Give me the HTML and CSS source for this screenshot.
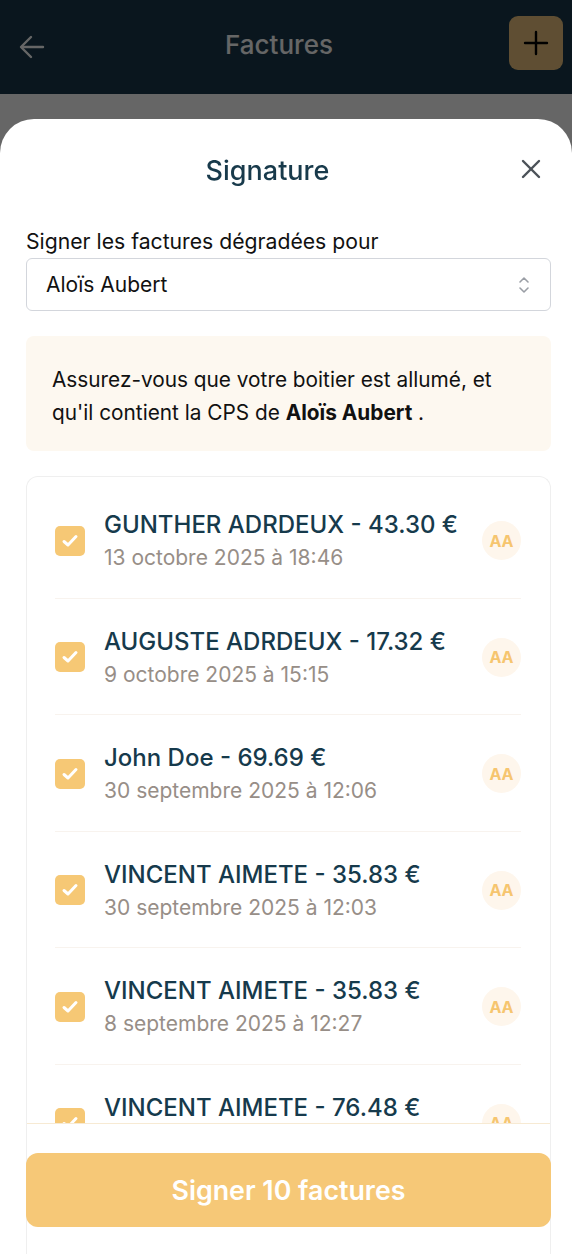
FILE: index.html
```html
<!DOCTYPE html>
<html lang="fr">
<head>
    <meta charset="UTF-8">
    <meta name="viewport" content="width=device-width, initial-scale=1">
    <title>Factures</title>
    <link rel="stylesheet" href="styles.css">
</head>
<body>
<!-- Barre du haut -->
<header class="topbar">
    <button class="icon-btn back" aria-label="Retour">
        <svg width="26" height="24" viewBox="0 0 26 24" fill="none" stroke="currentColor" stroke-width="2.4" stroke-linecap="round" stroke-linejoin="round">
            <path d="M24 12H3"/><path d="M12 2L2 12l10 10"/>
        </svg>
    </button>
    <h1 class="topbar-title">Factures</h1>
    <button class="add-btn" aria-label="Ajouter">
        <svg width="28" height="28" viewBox="0 0 28 28" fill="none" stroke="currentColor" stroke-width="2.4" stroke-linecap="round">
            <path d="M14 3v22"/><path d="M3 14h22"/>
        </svg>
    </button>
</header>
<main class="page-body"></main>

<!-- Fond assombri -->
<div class="backdrop"></div>

<!-- Feuille de signature -->
<section class="sheet">
    <div class="sheet-head">
        <h2>Signature</h2>
        <button class="close-btn" aria-label="Fermer">
            <svg width="20" height="20" viewBox="0 0 20 20" fill="none" stroke="currentColor" stroke-width="2.4" stroke-linecap="round">
                <path d="M2 2l16 16"/><path d="M18 2L2 18"/>
            </svg>
        </button>
    </div>

    <label class="field-label" for="praticien">Signer les factures dégradées pour</label>
    <div class="select">
        <span id="praticien">Aloïs Aubert</span>
        <svg width="14" height="20" viewBox="0 0 14 20" fill="none" stroke="currentColor" stroke-width="1.6" stroke-linecap="round" stroke-linejoin="round">
            <path d="M3 7l4-4 4 4"/><path d="M3 13l4 4 4-4"/>
        </svg>
    </div>

    <div class="notice">
        Assurez-vous que votre boitier est allumé, et qu'il contient la CPS de <strong>Aloïs Aubert</strong> .
    </div>

    <div class="invoice-card">
        <ul class="invoice-list" id="invoiceList"></ul>
    </div>

    <div class="sheet-footer">
        <button class="sign-btn">Signer 10 factures</button>
    </div>
</section>

<script>
    // Factures à signer
    const factures = [
        { nom: 'GUNTHER ADRDEUX', montant: '43.30', date: '13 octobre 2025 à 18:46' },
        { nom: 'AUGUSTE ADRDEUX', montant: '17.32', date: '9 octobre 2025 à 15:15' },
        { nom: 'John Doe', montant: '69.69', date: '30 septembre 2025 à 12:06' },
        { nom: 'VINCENT AIMETE', montant: '35.83', date: '30 septembre 2025 à 12:03' },
        { nom: 'VINCENT AIMETE', montant: '35.83', date: '8 septembre 2025 à 12:27' },
        { nom: 'VINCENT AIMETE', montant: '76.48', date: '2 septembre 2025 à 10:12' }
    ];

    const checkSvg = `<svg width="20" height="20" viewBox="0 0 20 20" fill="none" stroke="#fff" stroke-width="3" stroke-linecap="round" stroke-linejoin="round"><path d="M4 10.5l4 3.5 8-8.5"/></svg>`;

    const list = document.getElementById('invoiceList');
    factures.forEach(f => {
        const li = document.createElement('li');
        li.className = 'invoice';
        li.innerHTML = `
            <span class="checkbox">${checkSvg}</span>
            <div class="invoice-info">
                <div class="invoice-title">${f.nom} - ${f.montant} €</div>
                <div class="invoice-date">${f.date}</div>
            </div>
            <span class="avatar">AA</span>
        `;
        list.appendChild(li);
    });
</script>
</body>
</html>
```

FILE: styles.css
```css
/* Réglages généraux */
* { box-sizing: border-box; margin: 0; padding: 0; }
html, body { height: 100%; }
body {
    font-family: Inter, 'Noto Sans', sans-serif;
    background: #fff;
    overflow: hidden;
    color: #111;
}
button {
    font-family: inherit;
    border: none;
    background: none;
    cursor: pointer;
}

/* Barre du haut */
.topbar {
    height: 94px;
    background: #19394b;
    display: flex;
    align-items: center;
    padding: 0 9px 0 19px;
}
.icon-btn.back {
    color: #fff;
    display: flex;
    width: 30px;
}
.topbar-title {
    flex: 1;
    text-align: center;
    color: #fff;
    font-size: 26px;
    font-weight: 500;
    margin-top: -6px;
}
.add-btn {
    width: 54px;
    height: 54px;
    border-radius: 9px;
    background: #eec47f;
    color: #000;
    display: flex;
    align-items: center;
    justify-content: center;
    margin-top: -8px;
}
.page-body { height: calc(100% - 94px); }

/* Fond assombri */
.backdrop {
    position: fixed;
    inset: 0;
    background: rgba(0,0,0,0.6);
}

/* Feuille */
.sheet {
    position: fixed;
    left: 0;
    right: 0;
    top: 119px;
    bottom: 0;
    background: #fff;
    border-radius: 34px 34px 0 0;
    padding: 0 21px 0 26px;
    display: flex;
    flex-direction: column;
}
.sheet-head {
    height: 102px;
    display: flex;
    align-items: center;
    justify-content: center;
    position: relative;
}
.sheet-head h2 {
    font-size: 27px;
    font-weight: 500;
    color: #183a4b;
    margin-top: 1px;
    margin-right: 42px;
}
.close-btn {
    position: absolute;
    right: 10px;
    top: 40px;
    color: #4b5158;
    display: flex;
}
.field-label {
    display: block;
    font-size: 21.2px;
    line-height: 24px;
    margin-top: 8px;
}
.select {
    margin-top: 5px;
    height: 53px;
    border: 1.5px solid #d3d6dc;
    border-radius: 6px;
    display: flex;
    align-items: center;
    justify-content: space-between;
    padding: 0 19px 0 19px;
    font-size: 21px;
    color: #111;
}
.select svg { color: #9a9ea5; }
.notice {
    margin-top: 25px;
    background: #fdf8f0;
    border-radius: 8px;
    padding: 27px 26px 22px;
    font-size: 20.8px;
    line-height: 33px;
}
.notice strong { font-weight: 700; }

/* Liste des factures */
.invoice-card {
    margin-top: 25px;
    flex: 1;
    min-height: 0;
    overflow: hidden;
    border: 1px solid #efefef;
    border-bottom: none;
    border-radius: 12px 12px 0 0;
    padding: 5px 29px 0 28px;
}
.invoice-list { list-style: none; }
.invoice {
    display: flex;
    align-items: center;
    padding: 28px 0 26.6px;
    border-bottom: 1px solid #f8f3ee;
}
.checkbox {
    width: 30px;
    height: 30px;
    border-radius: 5px;
    background: #f6c875;
    display: flex;
    align-items: center;
    justify-content: center;
    flex-shrink: 0;
}
.invoice-info {
    flex: 1;
    margin-left: 19px;
}
.invoice-title {
    font-size: 24px;
    line-height: 30px;
    font-weight: 500;
    color: #163a4c;
}
.invoice-date {
    margin-top: 5px;
    font-size: 21px;
    line-height: 26px;
    color: #978e87;
}
.avatar {
    width: 39px;
    height: 39px;
    border-radius: 50%;
    background: #fef6ec;
    color: #f6c56f;
    font-size: 16px;
    font-weight: 700;
    display: flex;
    align-items: center;
    justify-content: center;
    flex-shrink: 0;
}

/* Pied de la feuille */
.sheet-footer {
    position: absolute;
    left: 27px;
    right: 22px;
    bottom: 0;
    height: 131px;
    background: #fff;
    border-top: 1px solid #f7ead3;
    padding-top: 29px;
}
.sign-btn {
    display: block;
    width: calc(100% + 2px);
    margin-left: -1px;
    height: 74px;
    border-radius: 12px;
    background: #f6c877;
    color: #fff;
    font-size: 26.8px;
    font-weight: 600;
}
```
